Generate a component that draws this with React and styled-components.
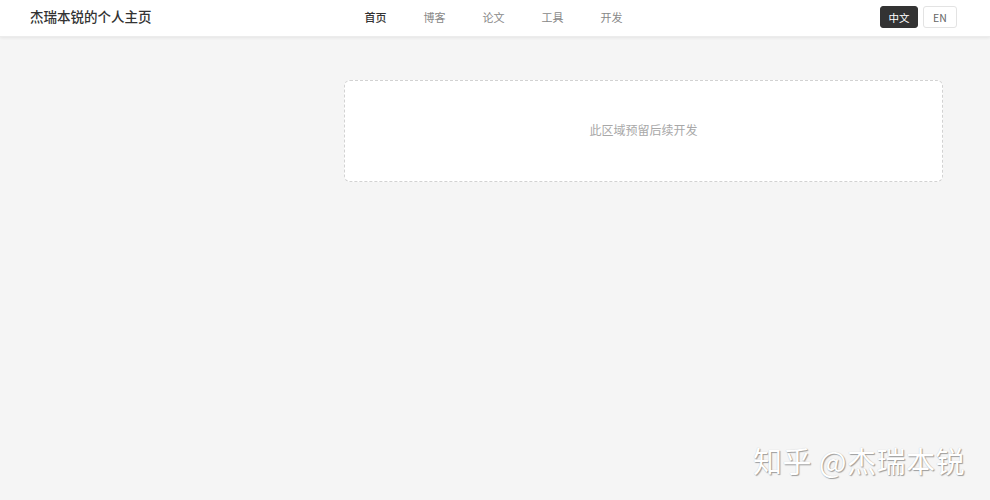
import React from "react";
import styled, { createGlobalStyle } from "styled-components";

const Global = createGlobalStyle`
  html, body { margin: 0; padding: 0; }
  body {
    background: #f5f5f5;
    font-family: "Noto Sans CJK SC", "Noto Sans", sans-serif;
    height: 500px;
    overflow: hidden;
  }
`;

const Page = styled.div`
  position: relative;
  min-height: 500px;
  background: #f5f5f5;
`;

const Header = styled.header`
  height: 37px;
  background: #fff;
  box-shadow: 0 1px 3px rgba(0, 0, 0, 0.07);
  border-bottom: 1px solid #ececec;
  box-sizing: border-box;
  display: grid;
  grid-template-columns: 1fr auto 1fr;
  align-items: center;
  padding: 0 33px 2px 30px;
`;

const Title = styled.div`
  font-size: 13.5px;
  color: #333;
  font-weight: 500;
  line-height: 1;
`;

const Nav = styled.nav`
  display: flex;
  gap: 37px;
`;

const NavItem = styled.a`
  font-size: 11px;
  color: ${(p) => (p.$active ? "#333" : "#888")};
  font-weight: ${(p) => (p.$active ? 500 : 400)};
  text-decoration: none;
  cursor: pointer;
`;

const Lang = styled.div`
  display: flex;
  justify-content: flex-end;
  gap: 5px;
`;

const LangBtn = styled.button`
  height: 22px;
  padding: 0;
  width: ${(p) => p.$w}px;
  border-radius: 3px;
  font-size: 10.5px;
  font-family: "Noto Sans CJK SC", "Noto Sans", sans-serif;
  border: 1px solid ${(p) => (p.$active ? "#333" : "#e3e3e3")};
  background: ${(p) => (p.$active ? "#333" : "#fff")};
  color: ${(p) => (p.$active ? "#fff" : "#666")};
  cursor: pointer;
`;

const Main = styled.main`
  display: grid;
  grid-template-columns: 290px 1fr;
  gap: 24px;
  padding: 43px 47px 0 30px;
`;

const Sidebar = styled.aside``;

const Placeholder = styled.div`
  height: 102px;
  box-sizing: border-box;
  background: #fff;
  border: 1px dashed #d2d2d2;
  border-radius: 6px;
  display: flex;
  align-items: center;
  justify-content: center;
  padding-bottom: 3px;
  font-size: 12px;
  color: #a8a8a8;
`;

const Watermark = styled.div`
  position: absolute;
  right: 25px;
  bottom: 25px;
  font-size: 29px;
  color: #fff;
  letter-spacing: 0.5px;
  text-shadow: 1px 1px 1px rgba(0, 0, 0, 0.35), 0 0 1px rgba(0, 0, 0, 0.2);
  font-family: "Noto Sans CJK SC", sans-serif;
  line-height: 1;
`;

export default function App() {
  const nav = ["首页", "博客", "论文", "工具", "开发"];
  return (
    <Page>
      <Global />
      <Header>
        <Title>杰瑞本锐的个人主页</Title>
        <Nav>
          {nav.map((n, i) => (
            <NavItem key={n} $active={i === 0}>
              {n}
            </NavItem>
          ))}
        </Nav>
        <Lang>
          <LangBtn $active $w={38}>中文</LangBtn>
          <LangBtn $w={34}>EN</LangBtn>
        </Lang>
      </Header>
      <Main>
        <Sidebar />
        <Placeholder>此区域预留后续开发</Placeholder>
      </Main>
      <Watermark>知乎 @杰瑞本锐</Watermark>
    </Page>
  );
}
